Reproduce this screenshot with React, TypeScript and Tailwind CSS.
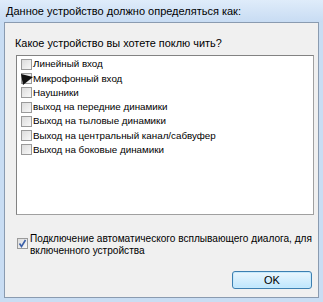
import React from "react";

const items = [
  { label: "Линейный вход", checked: false },
  { label: "Микрофонный вход", checked: true },
  { label: "Наушники", checked: false },
  { label: "выход на передние динамики", checked: false },
  { label: "Выход на тыловые динамики", checked: false },
  { label: "Выход на центральный канал/сабвуфер", checked: false },
  { label: "Выход на боковые динамики", checked: false },
];

function Box({ mark }: { mark?: "wedge" | "check" }) {
  return (
    <div className="relative w-[11px] h-[11px] shrink-0 border border-[#9a9a9a] bg-gradient-to-br from-[#dcdcdc] to-[#f8f8f8]">
      {mark === "wedge" && (
        <svg className="absolute left-[-1px] top-[-1px]" width="12" height="12" viewBox="0 0 12 12">
          <polygon points="0,1 12,4 2,12" fill="#111" />
        </svg>
      )}
      {mark === "check" && (
        <svg className="absolute left-0 top-0" width="9" height="9" viewBox="0 0 9 9">
          <path d="M1.5 4.5 L3.5 7.5 L7.5 1" stroke="#3a5fa8" strokeWidth="1.6" fill="none" />
        </svg>
      )}
    </div>
  );
}

export default function App() {
  return (
    <div
      className="w-[323px] h-[302px] flex flex-col bg-[#c9ddf3] text-black overflow-hidden"
      style={{ fontFamily: '"Liberation Sans", Arial, sans-serif' }}
    >
      <div className="h-[22px] shrink-0 flex items-center pl-[6px] text-[11px] bg-gradient-to-b from-[#dfecfa] to-[#c8dcf3]">
        Данное устройство должно определяться как:
      </div>
      <div className="flex-1 flex flex-col px-[4px] pb-[4px]">
        <div className="flex-1 flex flex-col border border-[#8a9bb0] bg-[#f0f0f0] pl-[10px] pr-[4px]">
          <div className="mt-[12px] h-[16px] flex items-center text-[10.9px]">
            Какое устройство вы хотете поклю чить?
          </div>
          <div className="mt-[4px] ml-[1px] h-[160px] border border-[#a0a0a0] border-t-[#828282] border-l-[#828282] bg-white pt-[1px] pl-[4px]">
            {items.map((it) => (
              <div key={it.label} className="h-[14.3px] flex items-center gap-[1px] text-[9.8px]">
                <Box mark={it.checked ? "wedge" : undefined} />
                <span className="leading-none">{it.label}</span>
              </div>
            ))}
          </div>
          <div className="mt-[18px] ml-[2px] flex items-start gap-[2px] text-[10.1px] leading-[12px]">
            <div className="mt-[5px]">
              <Box mark="check" />
            </div>
            <div className="whitespace-nowrap">
              Подключение автоматического всплывающего диалога, для
              <br />
              включенного устройства
            </div>
          </div>
          <div className="mt-[14px] flex justify-end pr-[2px]">
            <div className="w-[80px] h-[18px] rounded-[3px] border border-[#3c7fb1] bg-gradient-to-b from-[#eaf6fd] to-[#bee6fd] shadow-[inset_0_0_0_1px_#c6e9fc] flex items-center justify-center text-[11px]">
              OK
            </div>
          </div>
        </div>
      </div>
    </div>
  );
}
